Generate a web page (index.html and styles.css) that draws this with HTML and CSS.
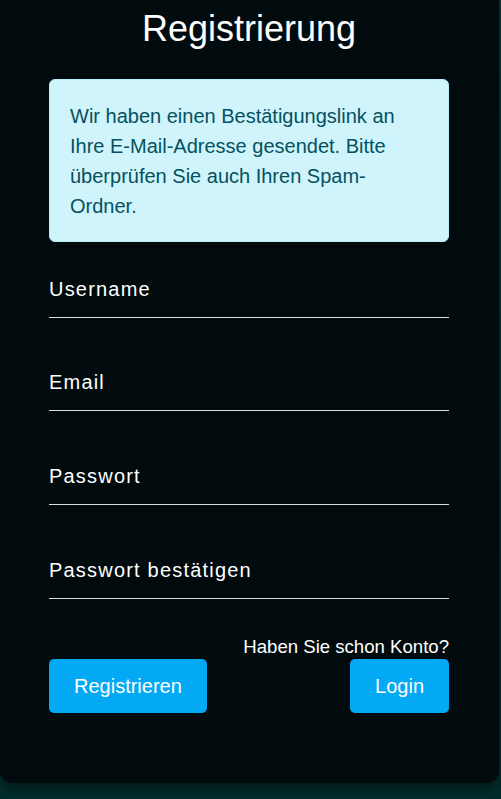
FILE: index.html
```html
<!DOCTYPE html>
<html lang="de">
<head>
<meta charset="utf-8">
<title>Registrierung</title>
<link rel="stylesheet" href="styles.css">
</head>
<body>
<main class="card">
  <h1 class="title">Registrierung</h1>
  <div class="alert">Wir haben einen Bestätigungslink an Ihre E-Mail-Adresse gesendet. Bitte überprüfen Sie auch Ihren Spam-Ordner.</div>
  <form class="form">
    <div class="field">
      <input class="input" type="text" id="u">
      <label class="label" for="u">Username</label>
    </div>
    <div class="field">
      <input class="input" type="email" id="e">
      <label class="label" for="e">Email</label>
    </div>
    <div class="field">
      <input class="input" type="password" id="p">
      <label class="label" for="p">Passwort</label>
    </div>
    <div class="field">
      <input class="input" type="password" id="p2">
      <label class="label" for="p2">Passwort bestätigen</label>
    </div>
    <div class="actions">
      <button class="btn" type="submit">Registrieren</button>
      <div class="login">
        <p class="hint">Haben Sie schon Konto?</p>
        <button class="btn" type="button">Login</button>
      </div>
    </div>
  </form>
</main>
</body>
</html>
```

FILE: styles.css
```css
* { box-sizing: border-box; }
html, body { margin: 0; padding: 0; }
body {
  background: linear-gradient(180deg, #003a36 0%, #002e2b 100%);
  min-height: 799px;
  font-family: "Liberation Sans", Arial, sans-serif;
}
.card {
  width: 499px;
  background: #010b0d;
  border-radius: 0 0 12px 12px;
  padding: 7px 50px 70px 49px;
  box-shadow: 0 6px 14px rgba(0, 0, 0, 0.45);
}
.title {
  margin: 0;
  font-size: 36px;
  line-height: 44px;
  font-weight: 400;
  color: #ffffff;
  text-align: center;
}
.alert {
  margin-top: 28px;
  background: #cff4fc;
  border: 1px solid #b6effb;
  border-radius: 6px;
  padding: 20.5px 20px;
  color: #055160;
  font-size: 20px;
  line-height: 30px;
}
.form { margin: 31.5px 0 0; }
.field {
  position: relative;
  height: 44px;
}
.field + .field { margin-top: 49.7px; }
.input {
  display: block;
  width: 100%;
  height: 44px;
  background: transparent;
  border: none;
  border-bottom: 1px solid #dcdcdc;
  outline: none;
  color: #fff;
  font-size: 20px;
  padding: 0;
}
.label {
  position: absolute;
  left: 0;
  top: 0;
  font-size: 20px;
  line-height: 30px;
  letter-spacing: 1.2px;
  color: #ffffff;
  pointer-events: none;
}
.actions {
  display: flex;
  justify-content: space-between;
  align-items: flex-end;
  margin-top: 37px;
}
.login {
  display: flex;
  flex-direction: column;
  align-items: flex-end;
}
.hint {
  margin: 0 0 1px;
  font-size: 18.6px;
  line-height: 22px;
  color: #ffffff;
}
.btn {
  background: #03a9f4;
  color: #ffffff;
  border: none;
  border-radius: 5px;
  font-family: "Liberation Sans", Arial, sans-serif;
  font-size: 20px;
  line-height: 24px;
  padding: 15px 25px;
}
```
